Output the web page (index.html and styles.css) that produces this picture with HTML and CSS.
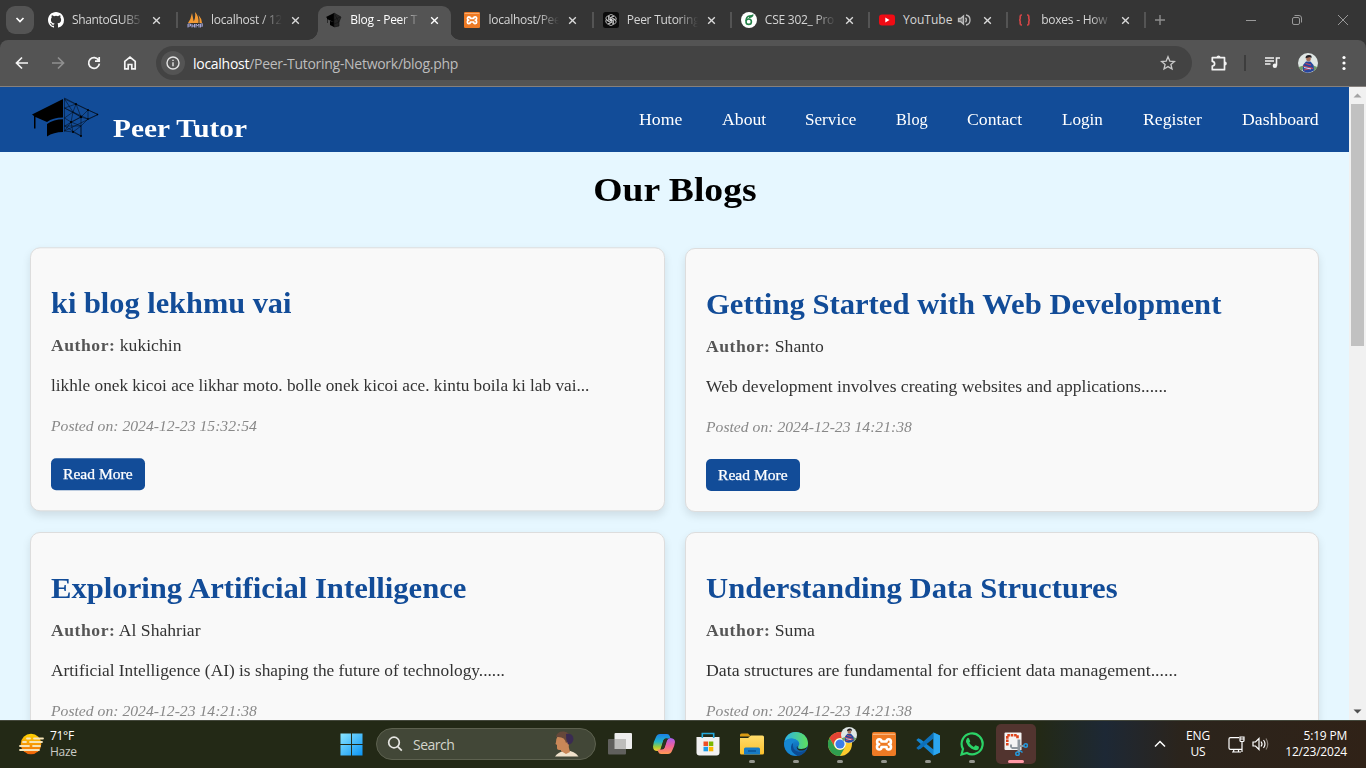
FILE: index.html
```html
<!DOCTYPE html>
<html lang="en">
<head>
<meta charset="utf-8">
<title>Blog - Peer Tutor</title>
<link rel="stylesheet" href="styles.css">
</head>
<body>
<svg class="defs" width="0" height="0" aria-hidden="true">
  <defs>
    <linearGradient id="sun" x1="0" y1="0" x2="0" y2="1"><stop offset="0" stop-color="#ffd400"/><stop offset="1" stop-color="#f0620a"/></linearGradient>
    <linearGradient id="win" x1="0" y1="0" x2="1" y2="1"><stop offset="0" stop-color="#8be5ff"/><stop offset="1" stop-color="#0a94f5"/></linearGradient>
    <linearGradient id="copA" x1="0" y1="0" x2="0" y2="1"><stop offset="0" stop-color="#1b7fe8"/><stop offset=".45" stop-color="#20b4c8"/><stop offset=".75" stop-color="#9ccb3c"/><stop offset="1" stop-color="#ffd02e"/></linearGradient>
    <linearGradient id="copB" x1="0" y1="0" x2="0" y2="1"><stop offset="0" stop-color="#a55cf0"/><stop offset=".5" stop-color="#f0619a"/><stop offset="1" stop-color="#ff9a52"/></linearGradient>
    <linearGradient id="edgeA" x1="0" y1="0" x2="1" y2="0"><stop offset="0" stop-color="#2bb1e8"/><stop offset="1" stop-color="#5fe05a"/></linearGradient>
    <linearGradient id="edgeB" x1="0" y1="0" x2="0" y2="1"><stop offset="0" stop-color="#1b9de0"/><stop offset="1" stop-color="#0b55a8"/></linearGradient>
    <linearGradient id="folder" x1="0" y1="0" x2="0" y2="1"><stop offset="0" stop-color="#ffdc6b"/><stop offset="1" stop-color="#fbc02c"/></linearGradient>
    <symbol id="close" viewBox="0 0 10 10"><path d="M1.300 1.300l7.400 7.400M8.700 1.300L1.300 8.700" stroke="currentColor" stroke-width="1.500"/></symbol>
    <symbol id="cap" viewBox="0 0 68 42">
      <path d="M1 17.500L32 2V20.500C25 20.500 20 22 16 25L4.500 20V31.500H3V19z"/>
      <path d="M16 27C20 24 26 22.300 32 22.300V35C26 35 20 36.500 16 39.500z"/>
      <g fill="none" stroke="#000" stroke-width=".45"><path d="M33.500 1V34.500M33.500 2L67 17.500L33.500 34M33.500 1L45 7L57 13L67 17.500L57 22L50 29L50 39L42 35L33.500 34L40 25L33.500 21L42 15L33.500 11L45 7L42 15L50 20L57 13L57 22L50 20L40 25L50 29L42 35L40 25M33.500 11L50 20L33.500 29L50 29M45 7L50 20L50 39L33.500 29M33.500 2L42 15L57 22M42 15L40 25"/></g>
      <circle cx="45" cy="7" r="1"/><circle cx="50" cy="20" r="1.200"/><circle cx="57" cy="13" r=".9"/><circle cx="40" cy="25" r="1"/><circle cx="50" cy="39" r="1"/><circle cx="66.500" cy="17.500" r=".8"/><circle cx="57" cy="22" r=".8"/><circle cx="42" cy="35" r="1"/>
    </symbol>
    <symbol id="xampp" viewBox="0 0 24 24">
      <rect width="24" height="24" rx="2" fill="#ee7a24"/><rect x="1" y="1.700" width="22" height="1.300" fill="#f8b27a"/>
      <path d="M7.300 7.200Q9.500 7.200 9.500 9.500H14.500Q14.500 7.200 16.700 7.200T18.900 9.700 16.900 12.300Q19 12.600 19 15T16.700 17.500 14.500 15H9.500Q9.500 17.500 7.300 17.500T5 15 7.100 12.300Q5.100 12 5.100 9.700T7.300 7.200z" fill="none" stroke="#fff" stroke-width="2.600" stroke-linejoin="round"/>
    </symbol>
    <symbol id="avatar" viewBox="0 0 20 20">
      <circle cx="10" cy="10" r="10" fill="#dfe6e4"/><path d="M.8 14A10 10 0 0 0 4 18l3-6z M19.200 14A10 10 0 0 1 16 18l-2-6z" fill="#6d9a6a"/>
      <path d="M5 12l3-3.500h4.500l3 3.500.5 5.500q-6 4-11 .5z" fill="#26469d"/><path d="M5 13l10 2.500M6 17l8-2M7.500 10.500l5.500 1.500" stroke="#c9485c" stroke-width="1.200"/><path d="M6 14.500l7 1.500" stroke="#fff" stroke-width=".8"/>
      <circle cx="10.500" cy="6" r="2.400" fill="#a5705a"/><path d="M7.500 5.200q0-3.200 3.500-3.200t2.300 3.200L12 4z" fill="#211d22"/>
    </symbol>
  </defs>
</svg>

<div class="tabstrip">
  <div class="tab-search"><svg width="10" height="8" viewBox="0 0 10 8"><path d="M1.500 2L5 5.500 8.500 2" fill="none" stroke="#fff" stroke-width="1.700"/></svg></div>
  <div class="tabs">
    <div class="tab">
      <svg class="fav" viewBox="0 0 16 16"><path fill="#fff" d="M8 0C3.580 0 0 3.580 0 8c0 3.540 2.290 6.530 5.470 7.590.4.070.550-.170.550-.380 0-.190-.010-.820-.010-1.490-2.010.370-2.530-.490-2.690-.940-.090-.230-.480-.940-.820-1.130-.280-.150-.680-.520-.010-.530.630-.010 1.080.580 1.230.820.720 1.210 1.870.870 2.330.660.070-.520.280-.870.510-1.070-1.780-.200-3.640-.890-3.640-3.950 0-.870.310-1.590.820-2.150-.080-.200-.360-1.020.080-2.120 0 0 .670-.210 2.200.820a7.600 7.600 0 0 1 4 0c1.530-1.040 2.200-.820 2.200-.820.440 1.100.160 1.920.080 2.120.510.560.820 1.270.820 2.150 0 3.070-1.870 3.750-3.650 3.950.290.250.540.730.540 1.480 0 1.070-.010 1.930-.010 2.200 0 .210.150.460.550.380A8.010 8.010 0 0 0 16 8c0-4.420-3.580-8-8-8z"/></svg>
      <span class="tab-title">ShantoGUB5</span><svg class="x"><use href="#close"/></svg>
    </div>
    <div class="tab sep">
      <svg class="fav" viewBox="0 0 16 16"><path d="M1 11Q4 7 5 1l2 10zM6 11Q9 6 8 0q4 4 3.500 11zM12.500 11Q13 7 11.500 3q3 3 3.500 8z" fill="#f39a34"/><path d="M1 15.500V12h2.500v2H1M5 12v3.500M5 14h2.500M7.500 12v3.500M9 15.500V12l1.500 2L12 12v3.500M13.500 15.500V12H16v2h-2.500" fill="none" stroke="#a5a6d8"/></svg>
      <span class="tab-title">localhost / 12</span><svg class="x"><use href="#close"/></svg>
    </div>
    <div class="tab active">
      <svg class="fav" viewBox="0 0 16 16"><path d="M0 5l8-4v9L3 8 1.500 7v4H1V6zM4 9l4 1v5l-4-2z"/><path d="M8 1l7 4-2 5v4l-5 1zM9 3l4 7M8 8l6-3M8 12l5-2" fill="#252525" stroke="#111" stroke-width=".6"/></svg>
      <span class="tab-title">Blog - Peer T</span><svg class="x"><use href="#close"/></svg>
    </div>
    <div class="tab">
      <svg class="fav"><use href="#xampp"/></svg>
      <span class="tab-title">localhost/Pee</span><svg class="x"><use href="#close"/></svg>
    </div>
    <div class="tab sep">
      <svg class="fav" viewBox="0 0 16 16"><rect width="16" height="16" rx="2.500" fill="#0b0b0b"/><g fill="none" stroke="#dcdcdc" stroke-width=".75"><path id="petal" d="M5.600 8V4.800Q5.800 2.500 8 2.500T10.600 4.300L7.600 6V9.300"/><path d="M5.600 8V4.800Q5.800 2.500 8 2.500T10.600 4.300L7.600 6V9.300" transform="rotate(60 8 8)"/><path d="M5.600 8V4.800Q5.800 2.500 8 2.500T10.600 4.300L7.600 6V9.300" transform="rotate(120 8 8)"/><path d="M5.600 8V4.800Q5.800 2.500 8 2.500T10.600 4.300L7.600 6V9.300" transform="rotate(180 8 8)"/><path d="M5.600 8V4.800Q5.800 2.500 8 2.500T10.600 4.300L7.600 6V9.300" transform="rotate(240 8 8)"/><path d="M5.600 8V4.800Q5.800 2.500 8 2.500T10.600 4.300L7.600 6V9.300" transform="rotate(300 8 8)"/></g></svg>
      <span class="tab-title">Peer Tutoring</span><svg class="x"><use href="#close"/></svg>
    </div>
    <div class="tab sep">
      <svg class="fav" viewBox="0 0 16 16"><circle cx="8" cy="8" r="8" fill="#fff"/><circle cx="7.700" cy="9.700" r="2.700" fill="none" stroke="#238047" stroke-width="1.600"/><path d="M5 9Q5 4.500 8.500 4T12 2.500q-.5 3-4 2.800" fill="none" stroke="#238047" stroke-width="1.400"/></svg>
      <span class="tab-title">CSE 302_ Pro</span><svg class="x"><use href="#close"/></svg>
    </div>
    <div class="tab sep">
      <svg class="fav" viewBox="0 0 16 16"><rect y="2.500" width="16" height="11" rx="3" fill="#f00b14"/><path d="M6.300 5.600L10.500 8l-4.200 2.400z" fill="#fff"/></svg>
      <span class="tab-title short">YouTube</span>
      <svg class="audio" viewBox="0 0 14 14" fill="none" stroke="#bdbdbd" stroke-width="1.300"><path d="M1.500 5.500h2L6.500 3v8L3.500 8.500h-2z" fill="#777"/><path d="M8.500 4.700q2 2.300 0 4.600M9 2q4 .8 4 5t-4 5"/></svg>
      <svg class="x"><use href="#close"/></svg>
    </div>
    <div class="tab sep last">
      <svg class="fav" viewBox="0 0 16 16" fill="none" stroke="#cf4546" stroke-width="1.700"><path d="M5 3H4.500Q3.200 3 3.200 4.500v2Q3.200 8 2 8q1.200 0 1.200 1.500v2Q3.200 13 4.500 13H5M10 3h.5q1.300 0 1.300 1.500v2q0 1.500 1.200 1.500-1.200 0-1.200 1.500v2q0 1.500-1.300 1.500H10"/></svg>
      <span class="tab-title">boxes - How</span><svg class="x"><use href="#close"/></svg>
    </div>
  </div>
  <svg class="newtab" width="10" height="10" viewBox="0 0 10 10"><path d="M5 0v10M0 5h10" stroke="#8d8d8d" stroke-width="1.400"/></svg>
  <div class="winctl">
    <svg viewBox="0 0 12 12"><path d="M1 6.500h10"/></svg>
    <svg viewBox="0 0 12 12"><rect x="1.500" y="3.500" width="7" height="7" rx="1.500"/><path d="M3.500 1.500H8Q10.500 1.500 10.500 4v4.500"/></svg>
    <svg viewBox="0 0 12 12"><path d="M1 1l10 10M11 1L1 11"/></svg>
  </div>
</div>

<div class="toolbar">
  <div class="navbtns">
    <svg viewBox="0 0 16 16"><path d="M14 8H2.500M8 2.500L2.500 8 8 13.500"/></svg>
    <svg viewBox="0 0 16 16" class="dim"><path d="M2 8h11.500M8 2.500L13.500 8 8 13.500"/></svg>
    <svg viewBox="0 0 16 16"><path d="M12.700 5.200A5.400 5.400 0 1 0 13.400 8.700M13.200 2v4.200H9"/></svg>
    <svg viewBox="0 0 16 16"><path d="M2.800 6.300L8 2.200l5.200 4.100v7.500H9.800V9.500H6.200v4.300H2.800z"/></svg>
  </div>
  <div class="omnibox">
    <div class="info"><svg width="14" height="14" viewBox="0 0 14 14" fill="none" stroke="#e4e4e4" stroke-width="1.400"><circle cx="7" cy="7" r="6"/><path d="M7 6.300v4M7 3.700v1.400"/></svg></div>
    <span class="url"><b>localhost</b>/Peer-Tutoring-Network/blog.php</span>
    <svg class="star" viewBox="0 0 16 16"><path d="M8 1.800l1.800 4.300 4.600.4-3.500 3 1.100 4.500L8 11.600 4 14l1.100-4.500-3.500-3 4.600-.4z" fill="none" stroke="#c9c9c9" stroke-width="1.300"/></svg>
  </div>
  <svg class="ext" viewBox="0 0 18 18"><path d="M2.300 3.700H14.500V15.700H2.300V12Q4.600 11.700 4.600 9.700T2.300 7.400z" fill="none" stroke="#f2f2f2" stroke-width="1.700" stroke-linejoin="round"/><path d="M6.500 3.500a2 2 0 0 1 4 0zM14.800 7.500a2 2 0 0 1 0 4z" fill="#f2f2f2"/></svg>
  <i class="tsep"></i>
  <svg class="media" viewBox="0 0 16 16"><path d="M1 3h9M1 6h9M1 9h5.500" stroke="#f2f2f2" stroke-width="1.500"/><path d="M12.500 10.500V3H16" fill="none" stroke="#f2f2f2" stroke-width="1.600"/><circle cx="10.900" cy="10.800" r="2.200" fill="#f2f2f2"/></svg>
  <svg class="me"><use href="#avatar"/></svg>
  <svg class="dots" viewBox="0 0 4 16" fill="#fff"><circle cx="2" cy="2.500" r="1.600"/><circle cx="2" cy="8" r="1.600"/><circle cx="2" cy="13.500" r="1.600"/></svg>
</div>

<div class="viewport">
  <div class="page">
    <header class="site-header">
      <svg class="logo"><use href="#cap"/></svg>
      <span class="brand">Peer Tutor</span>
      <nav class="menu"><a>Home</a><a>About</a><a>Service</a><a>Blog</a><a>Contact</a><a>Login</a><a>Register</a><a>Dashboard</a></nav>
    </header>
    <h1 class="heading">Our Blogs</h1>
    <main class="grid">
      <article class="card hovered">
        <h2 class="t1">ki blog lekhmu vai</h2>
        <p class="author"><strong>Author:</strong> kukichin</p>
        <p class="text p1">likhle onek kicoi ace likhar moto. bolle onek kicoi ace. kintu boila ki lab vai...</p>
        <p class="date">Posted on: 2024-12-23 15:32:54</p>
        <a class="more"><span>Read More</span></a>
      </article>
      <article class="card">
        <h2 class="t2">Getting Started with Web Development</h2>
        <p class="author"><strong>Author:</strong> Shanto</p>
        <p class="text p2">Web development involves creating websites and applications......</p>
        <p class="date">Posted on: 2024-12-23 14:21:38</p>
        <a class="more"><span>Read More</span></a>
      </article>
      <article class="card">
        <h2 class="t3">Exploring Artificial Intelligence</h2>
        <p class="author"><strong>Author:</strong> Al Shahriar</p>
        <p class="text p3">Artificial Intelligence (AI) is shaping the future of technology......</p>
        <p class="date">Posted on: 2024-12-23 14:21:38</p>
      </article>
      <article class="card">
        <h2 class="t4">Understanding Data Structures</h2>
        <p class="author"><strong>Author:</strong> Suma</p>
        <p class="text p4">Data structures are fundamental for efficient data management......</p>
        <p class="date">Posted on: 2024-12-23 14:21:38</p>
      </article>
    </main>
  </div>
  <div class="scrollbar">
    <svg viewBox="0 0 17 17"><path d="M4.500 10.500h8L8.500 6.500z" fill="#a3a3a3"/></svg>
    <i class="thumb"></i>
    <svg viewBox="0 0 17 17"><path d="M4.500 6.500h8l-4 4z" fill="#505050"/></svg>
  </div>
</div>

<footer class="taskbar">
  <div class="weather">
    <svg width="26" height="22" viewBox="0 0 26 22"><circle cx="13" cy="11" r="10.300" fill="url(#sun)"/><path d="M9 5.500h3M16 5.500h9M5 9h3M12 9h12M2 13h9M15 13h7M2 17h19" stroke="#f6e3b6" stroke-width="1.800" stroke-linecap="round"/></svg>
    <div class="wtext"><span>71°F</span><span class="soft">Haze</span></div>
  </div>
  <svg class="start" viewBox="0 0 24 24"><path d="M.5.500h11v11H.5zM12.500.500h11v11h-11zM.5 12.500h11v11H.5zM12.500 12.500h11v11h-11z" fill="url(#win)"/></svg>
  <div class="search">
    <svg width="16" height="16" viewBox="0 0 16 16" fill="none" stroke="#e6e6e2" stroke-width="1.700"><circle cx="7" cy="6.500" r="5.300"/><path d="M10.800 10.600l4 4"/></svg>
    <span>Search</span>
    <svg class="lady" width="24" height="26" viewBox="0 0 24 26"><path d="M0 25.500Q3 21 9 20q10-1 14.500 5.500z" fill="#f0e2cc"/><path d="M1 11Q1 4 7 4t7 7q-1 5 1 10l-4 2-5-3v-1q-3.500.5-4-1.500V14L.5 13z" fill="#c98758"/><path d="M1 6Q2 0 9 .5 15 1 16 8l-5 4Q10 5 1 6z" fill="#66483a"/><path d="M11 3q7-1 7.500 5-.5 5-5.500 5.500Q10.500 8 11 3z" fill="#3a2b52"/></svg>
  </div>
  <div class="apps">
    <div class="app"><svg viewBox="0 0 24 24"><rect x="6.500" y="1" width="17.500" height="16" rx="1" fill="#ededed"/><rect x="0" y="7" width="18" height="15.500" rx="1" fill="#60605d"/><path d="M6.500 7H18v10H6.500z" fill="#bdbdbb"/></svg></div>
    <div class="app"><svg viewBox="0 0 24 24"><path d="M8 2h7q2 0 2.700 2l.8 2.500H14q-2 0-2.700 2L9 16q-1 3-3.500 3Q1 19 1 14.500 1.300 10 4 5q1.200-3 4-3z" fill="url(#copA)"/><path d="M16 22H9q-2 0-2.700-2l-.8-2.500H10q2 0 2.700-2L15 8.500q1-2.500 3.500-2.500Q23 6.500 23 10q-.3 4-3 9-1.200 3-4 3z" fill="url(#copB)"/><path d="M11.500 8.500Q12 6.500 14 6.500h1L12.500 15q-.5 2-2 2H9z" fill="#2a3620"/></svg></div>
    <div class="app"><svg viewBox="0 0 24 24"><path d="M.5 5h23v15.500q0 3-3 3h-17q-3 0-3-3z" fill="#f1f1f1"/><path d="M6.300 6V1.500h11.400V6" fill="none" stroke="#25a9dc" stroke-width="1.600"/><path d="M7.500 9.500H12V14H7.500z" fill="#ee4f25"/><path d="M12.800 9.500h4.500V14h-4.500z" fill="#7bb800"/><path d="M7.500 14.800H12v4.500H7.500z" fill="#1c9be8"/><path d="M12.800 14.800h4.500v4.500h-4.500z" fill="#fab600"/></svg></div>
    <div class="app run"><svg viewBox="0 0 24 24"><path d="M0 3q0-1.500 1.500-1.500H8l3 3H0z" fill="#d99a12"/><path d="M0 6h8l3-2.500h11.500Q24 3.500 24 5v16q0 1.500-1.500 1.500h-21Q0 22.500 0 21z" fill="url(#folder)"/><path d="M4 22.500V17q0-1.500 1.500-1.500h13q1.500 0 1.500 1.500v5.500z" fill="#177bc5"/><path d="M8 19h8" stroke="#0c5698" stroke-width="1.600"/></svg></div>
    <div class="app run"><svg viewBox="0 0 24 24"><circle cx="12" cy="12" r="12" fill="url(#edgeB)"/><path d="M.5 9Q3 0 12 0q11 .5 12 11.500-.3 5.500-6.500 5.500-4.500-.2-3-3 2-3-1-5.500Q7 4.500.5 9z" fill="url(#edgeA)"/><path d="M.2 11Q3 6.500 8 6.500q4 .3 6 2.800-4-.8-5.500 2.200-2 8 5 12-5.500 1.300-9.500-2.500Q0 17 .2 11z" fill="#1687d2"/><path d="M9 11q-1.500 7 6 9 4 0 7.500-2.500-3.500 6-9 6.200-7-3.200-6.500-8.700.3-3 2-4z" fill="#0c4b93"/><path d="M13.800 14.200q-1.600 2.800 3.700 2.900 3.300 0 5.800-2.100-1.300 3.300-5.300 3.600-5.300.1-5.300-3.600z" fill="#222916"/></svg></div>
    <div class="app run"><svg viewBox="0 0 24 24"><circle cx="12" cy="12" r="12" fill="#fcca2d"/><path d="M1.600 6A12 12 0 0 1 22.400 6H12a6 6 0 0 0-5.200 9z" fill="#e54335"/><path d="M1.600 6A12 12 0 0 0 12 24l5.200-9A6 6 0 0 1 6.800 15z" fill="#2f9e4f"/><circle cx="12" cy="12" r="5.800" fill="#fff"/><circle cx="12" cy="12" r="4.600" fill="#3d7de8"/></svg><svg class="badge"><use href="#avatar"/></svg></div>
    <div class="app run"><svg><use href="#xampp"/></svg></div>
    <div class="app run"><svg viewBox="0 0 24 24"><path d="M17.500.500L24 3.500v17l-6.500 3L2 9.500.3 8l2-1.800L5 7.500l12.500 10z" fill="#1484cf"/><path d="M.3 16l2 1.800L5 16.500l12.500-10v-6L2.500 14z" fill="#0d70ba"/><path d="M17.500.500L24 3.500v17l-6.500 3z" fill="#2ba6f0"/></svg></div>
    <div class="app run"><svg viewBox="0 0 24 24"><path d="M1.500 22.500l1.500-5.500a10.500 10.500 0 1 1 4 4z" fill="#222916" stroke="#2bd367" stroke-width="2.200"/><path d="M7 6.500q1-1.300 2 0l1.200 2.700q0 .8-1 1.600 1.800 3 4.600 4.200l1.400-1.600q.5-.4 1 0l2.500 1.200q.8 1-.5 2.800-2.500 1.800-6.700-.7Q7.500 14.500 6 10q-.3-2 1-3.500z" fill="#2bd367"/></svg></div>
    <div class="app run current"><svg viewBox="0 0 24 24"><path d="M1.500.500h15q1 0 1 1V18H1.500q-1 0-1-1V1.500q0-1 1-1z" fill="#f4f4f4"/><path d="M3.300 13.500V3.300H13.500V7" fill="none" stroke="#de431b" stroke-width="2.600" stroke-dasharray="2.600 .8"/><path d="M6 15v-2.500h2V15h5.500V7.500h2.800V13H20v2h-3.700v5h-2.800v-3H8z" fill="#8f989f"/><g fill="none" stroke="#2497da" stroke-width="1.600"><circle cx="21.700" cy="13.500" r="1.700"/><circle cx="13.500" cy="21.700" r="1.700"/><path d="M16 18.500l2.500 2"/></g></svg></div>
  </div>
  <div class="tray">
    <svg class="chev" viewBox="0 0 12 12"><path d="M1 8.500l5-5 5 5" fill="none" stroke="#fff" stroke-width="1.500"/></svg>
    <div class="lang"><span>ENG</span><span>US</span></div>
    <svg class="net" viewBox="0 0 17 17" fill="none" stroke="#fff" stroke-width="1.200"><path d="M11 1.600H2.500Q1 1.600 1 3v9q0 1.400 1.500 1.400H14M5.700 13.400v2.500M10.500 13.400v2.500M4 16h9M12 1h4v3.500q0 1-1 1h-2q-1 0-1-1zM14 5.500V16M12 3h4"/></svg>
    <svg class="vol" viewBox="0 0 17 16" fill="none" stroke="#fff" stroke-width="1.200"><path d="M1 6h2.500L7 2.500v11L3.500 10H1zM9 5.500q2 2.500 0 5M11.500 4q3 4 0 8"/><path d="M14 2.500q3.500 5.500 0 11" stroke="#8b847b"/></svg>
    <div class="clock"><span>5:19 PM</span><span>12/23/2024</span></div>
  </div>
</footer>
</body>
</html>
```
FILE: styles.css
```css
* { box-sizing: border-box; }
body { margin: 0; width: 1366px; height: 768px; overflow: hidden; display: flex; flex-direction: column; background: #353535; font-family: "Open Sans", "Noto Sans", sans-serif; font-size: 12px; }
svg { display: block; flex: none; }
.defs { position: absolute; }

/* Tab strip */
.tabstrip { height: 40px; flex: none; display: flex; align-items: center; background: #353535; color: #d5d5d5; }
.tab-search { width: 28px; height: 28px; margin-left: 6px; border-radius: 9px; background: #545454; display: flex; align-items: center; justify-content: center; }
.tabs { display: flex; align-self: stretch; margin-left: 4px; }
.tab { width: 138.2px; padding: 0 0 0 10px; display: flex; align-items: center; position: relative; }
.tab:nth-child(2) { width: 139.3px; }
.tab:first-child { width: 139px; }
.fav { width: 16px; height: 16px; }
.tab-title { width: 74px; margin-left: 8px; white-space: nowrap; letter-spacing: -.25px; line-height: 18px; -webkit-mask-image: linear-gradient(90deg, #000 68%, transparent 96%); mask-image: linear-gradient(90deg, #000 68%, transparent 96%); }
.tab:first-child .tab-title { letter-spacing: -.35px; }
.tab-title.short { width: 51px; letter-spacing: 0; -webkit-mask-image: none; mask-image: none; }
.audio { width: 14px; height: 14px; margin-left: 3px; margin-right: 6px; }
.x { width: 9px; height: 9px; margin-left: 6px; color: #dadada; }
.tab.sep::before, .tab.last::after { content: ""; position: absolute; top: 12px; left: -1px; width: 2px; height: 16px; background: #545454; }
.tab.last::after { left: 137px; }
.tab.active { color: #fff; isolation: isolate; }
.active .x { color: #fff; }
.tab.active::before { content: ""; position: absolute; z-index: -1; left: 1.5px; top: 6px; width: 133px; height: 34px; border-radius: 9px 9px 0 0; background: #545454; }
.tab.active::after { content: ""; position: absolute; z-index: -2; left: -8px; bottom: 0; width: 152px; height: 10px; background: radial-gradient(circle at 0 0, transparent 9.5px, #545454 10px) 0 0 / 10px 10px no-repeat, radial-gradient(circle at 100% 0, transparent 9.5px, #545454 10px) 100% 0 / 10px 10px no-repeat; }
.newtab { margin-left: 10px; }
.winctl { display: flex; gap: 34px; margin-left: auto; margin-right: 17px; }
.winctl svg { width: 12px; height: 12px; fill: none; stroke: #999; stroke-width: 1; }

/* Toolbar */
.toolbar { height: 47px; flex: none; display: flex; align-items: center; background: #545454; border-radius: 8px 8px 0 0; border-bottom: 1px solid #85807d; }
.navbtns { display: flex; gap: 20px; margin-left: 14px; }
.navbtns svg { width: 16px; height: 16px; fill: none; stroke: #f5f5f5; stroke-width: 1.7; }
.navbtns .dim { stroke: #909090; }
.omnibox { margin-left: 18px; width: 1036px; height: 34px; border-radius: 17px; background: #434343; display: flex; align-items: center; }
.info { width: 24px; height: 24px; margin-left: 5px; border-radius: 50%; background: #545454; display: flex; align-items: center; justify-content: center; }
.url { margin-left: 8px; font-size: 14px; letter-spacing: -.28px; color: #bdbdbd; }
.url b { font-weight: 400; color: #fff; }
.star { width: 16px; height: 16px; margin-left: auto; margin-right: 16px; }
.ext { width: 18px; height: 18px; margin-left: 18px; }
.tsep { width: 2px; height: 16px; background: #3d3d3d; margin-left: 16px; }
.media { width: 16px; height: 16px; margin-left: 18px; }
.me { width: 20px; height: 20px; margin-left: 18px; }
.dots { width: 4px; height: 16px; margin-left: 24px; }

/* Web page */
.viewport { height: 633px; flex: none; display: flex; overflow: hidden; font-family: Georgia, "Liberation Serif", serif; }
.page { width: 1349px; height: 633px; overflow: hidden; background: #e6f7ff; }
.site-header { height: 65px; display: flex; background: #124c98; color: #fff; padding-left: 31px; }
.logo { width: 68px; height: 42px; margin-top: 10px; }
.brand { width: max-content; margin-left: 14px; margin-top: 27px; font-size: 25.2px; line-height: 30px; font-weight: 700; white-space: nowrap; transform: scaleX(1.165); transform-origin: left; }
.menu { margin-left: auto; margin-right: 30px; display: grid; grid-template-columns: 43px 43px 51px 31px 55px 41px 59px 77px; column-gap: 40px; font-size: 16.8px; line-height: 20px; margin-top: 23px; white-space: nowrap; }
.menu a { transform: scaleX(1.055); transform-origin: left; }
.menu a:nth-child(3), .menu a:nth-child(6) { transform: scaleX(1.02); }
.menu a:nth-child(4) { transform: scaleX(.97); }
.heading { width: max-content; margin: 18px auto 0; height: 40px; line-height: 40px; font-size: 33.6px; transform: scaleX(1.12); }
.grid { margin: 38px 30px 0; display: grid; grid-template-columns: 635px 634px; grid-auto-rows: 264px; gap: 20px; }
.card { background: #f9f9f9; border: 1px solid #ddd; border-radius: 10px; padding: 20px; box-shadow: 0 4px 8px rgba(0,0,0,.1); color: #333; font-size: 16.8px; }
.card.hovered { transform: translateY(-.7px); }
.card h2, .card p { width: max-content; transform-origin: left; white-space: nowrap; }
.card h2 { margin: 20px 0 0; line-height: 32px; font-size: 28.6px; color: #124c98; transform: scaleX(1.072); }
.card h2.t1 { transform: scaleX(1.062); }
.card p { margin: 20px 0 0; line-height: 20px; }
.card .author { margin-top: 16px; transform: scaleX(1.05); }
.author strong { color: #555; letter-spacing: .5px; }
.card .p1 { transform: scaleX(1.027); }
.card .p2 { transform: scaleX(1.045); }
.card .p3 { transform: scaleX(1.032); }
.card .p4 { transform: scaleX(1.06); }
.card .date { font-size: 15px; font-style: italic; color: #888; transform: scaleX(1.045); }
.more { display: block; width: 94px; height: 32px; margin-top: 22px; border-radius: 5px; background: #124c98; color: #fff; font-size: 14.7px; line-height: 32px; text-align: center; -webkit-text-stroke: .25px #fff; }
.more span { display: inline-block; transform: scaleX(1.06); }
.scrollbar { width: 17px; display: flex; flex-direction: column; background: #f1f1f1; }
.scrollbar svg { width: 17px; height: 17px; }
.thumb { width: 13px; height: 242px; margin: 0 auto auto; background: #c1c1c1; }

/* Taskbar */
.taskbar { height: 48px; flex: none; display: flex; align-items: center; padding-bottom: 1px; border-top: 1px solid #44483c; background: linear-gradient(90deg, #232916 0, #232916 1040px, #1d2835 1105px, #2b241c 1180px, #302217 1366px); color: #fff; }
.weather { display: flex; width: 340px; padding-left: 18px; align-items: center; }
.wtext { margin-left: 6px; display: flex; flex-direction: column; line-height: 16px; font-size: 12px; letter-spacing: -.3px; }
.soft { color: #cbccc6; }
.start { width: 23px; height: 23px; }
.search { width: 220px; height: 32px; margin-left: 13px; border: 1px solid #5d614f; border-radius: 16px; background: #424737; display: flex; align-items: center; padding: 0 16px 0 10px; font-size: 14px; color: #d3d5cd; }
.search span { margin-left: 10px; letter-spacing: -.5px; }
.lady { margin-left: auto; }
.apps { display: flex; gap: 4px; margin-left: 4px; }
.app { width: 40px; height: 40px; border-radius: 5px; position: relative; display: flex; align-items: center; justify-content: center; }
.app svg { width: 24px; height: 24px; }
.app .badge { position: absolute; width: 16px; height: 16px; left: 21px; top: 3px; }
.app.run::after { content: ""; position: absolute; bottom: 1px; left: 17px; width: 6px; height: 3px; border-radius: 2px; background: #94958d; }
.app.current { background: #52342f; }
.app.current::after { left: 12px; width: 16px; background: #ff98a4; }
.tray { margin-left: auto; margin-right: 19px; display: flex; align-items: center; line-height: 16px; font-size: 12px; letter-spacing: -.2px; }
.chev { width: 12px; height: 12px; }
.lang, .clock { display: flex; flex-direction: column; }
.lang { align-items: center; width: 26px; margin-left: 19px; }
.net { width: 17px; height: 17px; margin-left: 17px; }
.vol { width: 17px; height: 16px; margin-left: 7px; }
.clock { width: 63px; margin-left: 15px; align-items: flex-end; }
```
